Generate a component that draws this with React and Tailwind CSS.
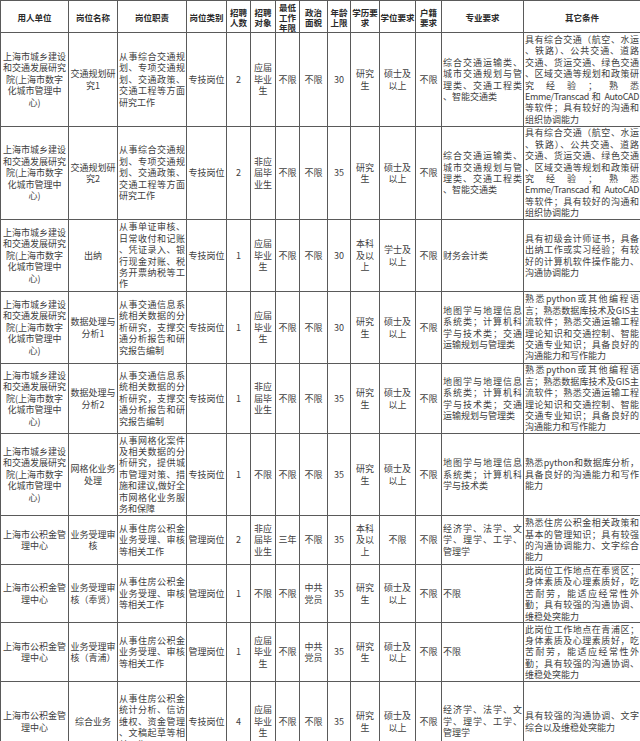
import React from 'react'

// column widths in px, summing to 640
const cols = [68, 49, 69, 40, 24, 25, 24, 28, 23, 29, 36, 26, 82, 117]
// c = centered lines, j = justified lines (last line left)
const align = ['c', 'c', 'j', 'c', 'c', 'c', 'c', 'c', 'c', 'c', 'c', 'c', 'j', 'j']

const head = [
    '用人单位', '岗位名称', '岗位职责', '岗位类别', '招聘|人数', '招聘|对象', '最低|工作|年限',
    '政治|面貌', '年龄|上限', '学历要|求', '学位要求', '户籍|要求', '专业要求', '其它条件',
]

const unitA = '上海市城乡建设|和交通发展研究|院(上海市数字|化城市管理中|心)'
const unitB = '上海市公积金管|理中心'
const dutyTraffic = '从事综合交通规|划、专项交通规|划、交通政策、|交通工程等方面|研究工作'
const dutyData = '从事交通信息系|统相关数据的分|析研究，支撑交|通分析报告和研|究报告编制'
const dutyFund = '从事住房公积金|业务受理、审核|等相关工作'
const majorTraffic = '综合交通运输类、|城市交通规划与管|理类、交通工程类|、智能交通类'
const majorData = '地图学与地理信息|系统类；计算机科|学与技术类；交通|运输规划与管理类'
const majorEcon = '经济学、法学、文|学、理学、工学、|管理学'
// a leading ~ marks a line set a little tighter so it fits the column
const otherTraffic = '具有综合交通（航空、水运|、铁路）、公共交通、道路|交通、货运交通、绿色交通|、区域交通等规划和政策研|究经验；熟悉|~Emme/Transcad 和 AutoCAD|等软件；具有较好的沟通和|组织协调能力'
const otherData = '熟悉python或其他编程语|言；熟悉数据库技术及GIS主|流软件；熟悉交通运输工程|理论知识和交通控制、智能|交通专业知识；具备良好的|沟通能力和写作能力'
const otherField = (area) => `此岗位工作地点在${area}区；|身体素质及心理素质好，吃|苦耐劳，能适应经常性外|勤；具有较强的沟通协调、|维稳处突能力`

const rows = [
    { h: 94, cells: [unitA, '交通规划研|究1', dutyTraffic, '专技岗位', '2', '应届|毕业|生', '不限', '不限', '30', '研究|生', '硕士及|以上', '不限', majorTraffic, otherTraffic] },
    { h: 93, cells: [unitA, '交通规划研|究2', dutyTraffic, '专技岗位', '2', '非应|届毕|业生', '不限', '不限', '35', '研究|生', '硕士及|以上', '不限', majorTraffic, otherTraffic] },
    { h: 72, cells: [unitA, '出纳', '从事单证审核、|日常收付和记账|、凭证录入、银|行现金对账、税|务开票纳税等工|作', '专技岗位', '1', '应届|毕业|生', '不限', '不限', '30', '本科|及以|上', '学士及|以上', '不限', '财务会计类', '具有初级会计师证书，具备|出纳工作或实习经验；有较|好的计算机软件操作能力、|沟通协调能力'] },
    { h: 72, cells: [unitA, '数据处理与|分析1', dutyData, '专技岗位', '1', '应届|毕业|生', '不限', '不限', '30', '研究|生', '硕士及|以上', '不限', majorData, otherData] },
    { h: 70, cells: [unitA, '数据处理与|分析2', dutyData, '专技岗位', '1', '非应|届毕|业生', '不限', '不限', '35', '研究|生', '硕士及|以上', '不限', majorData, otherData] },
    { h: 82, cells: [unitA, '网格化业务|处理', '从事网格化案件|及相关数据的分|析研究，提供城|市管理对策、措|施和建议,做好全|市网格化业务服|务和保障', '专技岗位', '1', '不限', '不限', '不限', '35', '研究|生', '硕士及|以上', '不限', '地图学与地理信息|系统类；计算机科|学与技术类', '熟悉python和数据库分析，|具备良好的沟通能力和写作|能力'] },
    { h: 49, cells: [unitB, '业务受理审|核', dutyFund, '管理岗位', '2', '非应|届毕|业生', '三年', '不限', '35', '本科|及以|上', '不限', '不限', majorEcon, '熟悉住房公积金相关政策和|基本的管理知识；具有较强|的沟通协调能力、文字综合|能力'] },
    { h: 58, cells: [unitB, '业务受理审|核（奉贤）', dutyFund, '管理岗位', '1', '不限', '不限', '中共|党员', '35', '研究|生', '硕士及|以上', '不限', '不限', otherField('奉贤')] },
    { h: 59, cells: [unitB, '业务受理审|核（青浦）', dutyFund, '管理岗位', '1', '应届|毕业|生', '不限', '中共|党员', '35', '研究|生', '硕士及|以上', '不限', '不限', otherField('青浦')] },
    { h: 80, cells: [unitB, '综合业务', '从事住房公积金|统计分析、信访|维权、资金管理|、文稿起草等相|关工作', '专技岗位', '4', '应届|毕业|生', '不限', '不限', '35', '研究|生', '硕士及|以上', '不限', majorEcon, '具有较强的沟通协调、文字|综合以及维稳处突能力'] },
]

const Lines = ({ text, mode }) => {
    const lines = text.split('|')
    return lines.map((l, i) => {
        const tight = l.startsWith('~')
        const body = tight ? l.slice(1) : l
        let cls = 'whitespace-nowrap'
        if (mode === 'c') cls += ' text-center'
        else if (i < lines.length - 1) cls += ' text-justify [text-align-last:justify]'
        else cls += ' text-left'
        if (tight) cls += ' tracking-[-0.35px]'
        return (
            <div key={i} className={cls}>
                {body}
            </div>
        )
    })
}

export default function App() {
    return (
        <div className="w-[640px] h-[741px] overflow-hidden bg-white">
            <table
                className="table-fixed border-collapse w-[640px] text-[9px] leading-[11.4px] text-[#404040]"
                style={{ fontFamily: '"Noto Sans CJK SC", "Noto Sans", sans-serif' }}
            >
                <colgroup>
                    {cols.map((w, i) => (
                        <col key={i} style={{ width: w }} />
                    ))}
                </colgroup>
                <thead>
                    <tr className="h-[32px]">
                        {head.map((t, i) => (
                            <th key={i} className="border border-[#5a5a5a] p-0 align-middle font-semibold text-[#2a2a2a] text-[8.5px] leading-[10px] overflow-hidden">
                                <Lines text={t} mode="c" />
                            </th>
                        ))}
                    </tr>
                </thead>
                <tbody>
                    {rows.map((r, ri) => (
                        <tr key={ri} style={{ height: r.h }}>
                            {r.cells.map((c, ci) => (
                                <td key={ci} className="border border-[#5a5a5a] px-[1px] py-0 align-middle overflow-hidden">
                                    <Lines text={c} mode={align[ci]} />
                                </td>
                            ))}
                        </tr>
                    ))}
                </tbody>
            </table>
        </div>
    )
}
